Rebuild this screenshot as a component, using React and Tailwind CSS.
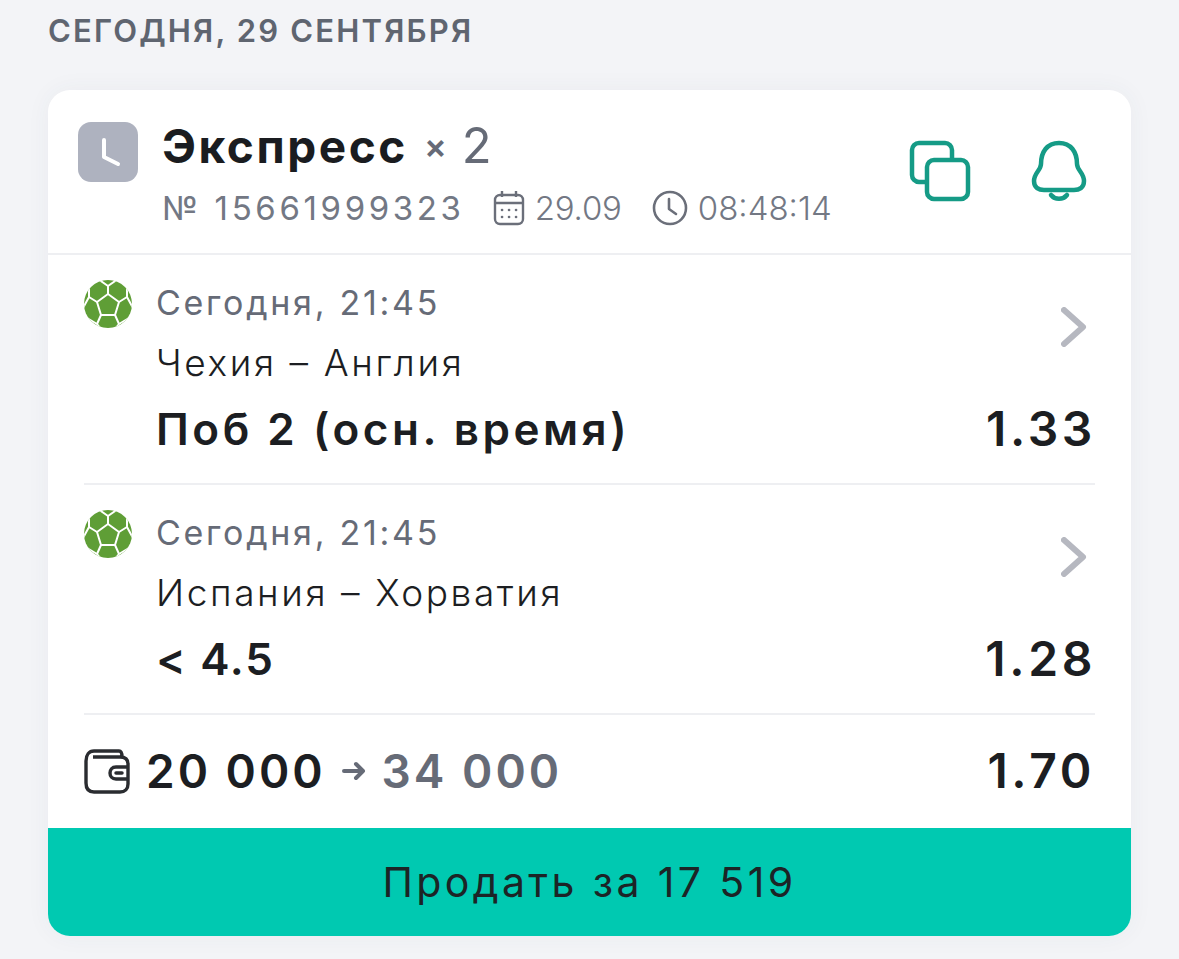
import React from 'react';

const Ball = () => (
  <svg width="50" height="50" viewBox="0 0 50 50" className="shrink-0">
    <clipPath id="ball-clip">
      <circle cx="25" cy="25" r="24" />
    </clipPath>
    <circle cx="25" cy="25" r="24" fill="#5f9e36" />
    <g fill="none" stroke="#fff" strokeWidth="2" strokeLinejoin="round" clipPath="url(#ball-clip)">
      <path d="M25 15 L36 23 L32 36 L18 36 L14 23 Z" />
      <path d="M25 15 L25 7 M36 23 L44 18 M32 36 L36 45 M18 36 L14 45 M14 23 L6 18" />
      <path d="M15 0 L25 7 L35 0 M44 18 L44 6 M44 18 L50 29 M36 45 L46 39 M14 45 L4 39 M6 18 L6 6 M6 18 L0 29 M14 45 L18 50 M36 45 L32 50" />
    </g>
  </svg>
);

const Chevron = () => (
  <svg width="26" height="40" viewBox="0 0 26 40" fill="none" className="shrink-0">
    <path d="M3 3 L22 20 L3 37" stroke="#b6b8c0" strokeWidth="6" strokeLinecap="round" strokeLinejoin="round" />
  </svg>
);

const Bet = ({ team, pick, odd, pickTracking }) => (
  <div className="flex border-b-2 border-[#eeeff2] mx-9 h-[230px]">
    <div className="pt-6 shrink-0 w-[73px] -ml-[1px]">
      <Ball />
    </div>
    <div className="flex-1 flex flex-col pt-[25px]">
      <div className="flex justify-between items-start pr-2">
        <div>
          <div className="text-[34px] leading-[46px] text-[#666b77] tracking-[0.08em]">Сегодня, 21:45</div>
          <div className="text-[37px] leading-[46px] mt-[14px] text-[#1c1e22] tracking-[0.07em] font-light">{team}</div>
        </div>
        <div className="pt-[27px]">
          <Chevron />
        </div>
      </div>
      <div className="flex justify-between items-center mt-[13px] -mr-[1px]">
        <div className={`text-[44px] leading-[60px] font-semibold text-[#1c1e22] ${pickTracking}`}>{pick}</div>
        <div className="text-[48px] leading-[60px] font-semibold text-[#1c1e22] tracking-[0.075em]">{odd}</div>
      </div>
    </div>
  </div>
);

export default function App() {
  return (
    <div className="min-h-[959px] bg-[#f3f4f7] px-12 pt-[10px] font-['Inter','Noto_Sans',sans-serif] overflow-hidden">
      <div className="text-[31px] leading-[42px] font-semibold text-[#5f6570] tracking-[0.07em]">СЕГОДНЯ, 29 СЕНТЯБРЯ</div>

      <div className="mt-[38px] bg-white rounded-[22px] overflow-hidden shadow-[0_0_24px_rgba(60,70,100,0.05)]">
        <div className="h-[165px] border-b-2 border-[#eeeff2] flex pl-[30px] pr-[44px]">
          <div className="mt-[32px] w-[60px] h-[60px] rounded-[13px] bg-[#aeb2bf] flex items-center justify-center shrink-0">
            <svg width="30" height="34" viewBox="0 0 30 34" fill="none">
              <path d="M11 5 V22 L25 29" stroke="#fff" strokeWidth="4" strokeLinecap="round" strokeLinejoin="round" />
            </svg>
          </div>

          <div className="ml-[24px] flex-1 pt-[27px]">
            <div className="flex items-center h-[58px]">
              <span className="text-[46px] leading-[58px] font-bold text-[#1a1c20] tracking-[0.055em]">Экспресс</span>
              <span className="ml-[16px] text-[34px] leading-[58px] font-semibold text-[#666b77]">×</span>
              <span className="ml-[15px] text-[49px] leading-[58px] text-[#666b77]">2</span>
            </div>
            <div className="flex items-center mt-[11px] text-[#737884]">
              <span className="text-[33px] leading-[44px] tracking-[0.11em]">№ 15661999323</span>
              <svg className="ml-[28px] shrink-0" width="32" height="36" viewBox="0 0 32 36" fill="none" stroke="#6b6f7a" strokeWidth="2.4">
                <rect x="2" y="5" width="28" height="29" rx="5" />
                <path d="M2 13 H30 M9 1 V7 M23 1 V7" />
                <path d="M9 20h.1M16 20h.1M23 20h.1M9 27h.1M16 27h.1M23 27h.1" strokeLinecap="round" strokeWidth="2.6" />
              </svg>
              <span className="ml-[10px] text-[33px] leading-[44px] tracking-[-0.005em] font-light">29.09</span>
              <svg className="ml-[30px] shrink-0" width="36" height="36" viewBox="0 0 36 36" fill="none" stroke="#6b6f7a" strokeWidth="2.6">
                <circle cx="18" cy="18" r="16" />
                <path d="M17 9 V19 L24 24" strokeLinecap="round" strokeLinejoin="round" />
              </svg>
              <span className="ml-[10px] text-[33px] leading-[44px] tracking-[0] font-light">08:48:14</span>
            </div>
          </div>

          <div className="flex items-start pt-[50px] gap-[60px]">
            <svg width="62" height="62" viewBox="0 0 62 62" fill="none" stroke="#159b86" strokeWidth="4.5">
              <path d="M18 42 H10 a7 7 0 0 1 -7 -7 V10 a7 7 0 0 1 7 -7 H36 a7 7 0 0 1 7 7 V20" />
              <rect x="18" y="20" width="41" height="39" rx="7" />
            </svg>
            <svg width="56" height="62" viewBox="0 0 56 62" fill="none" stroke="#159b86" strokeWidth="4.5" strokeLinecap="round">
              <path d="M28 3 C40 3 46 12 46 24 C46 30 53 33 53 41 C53 48 48 50 43 50 H13 C8 50 3 48 3 41 C3 33 10 30 10 24 C10 12 16 3 28 3 Z" />
              <path d="M20 55 C24 60 32 60 36 55" />
            </svg>
          </div>
        </div>

        <Bet team="Чехия – Англия" pick="Поб 2 (осн. время)" odd="1.33" pickTracking="tracking-[0.08em]" />
        <Bet team="Испания – Хорватия" pick="< 4.5" odd="1.28" pickTracking="tracking-[0.04em]" />

        <div className="h-[113px] flex items-center justify-between mx-9 -mr-[1px] pr-[37px] pb-[2px]">
          <div className="flex items-center">
            <svg width="46" height="46" viewBox="0 0 46 46" fill="none" stroke="#2a2c30" strokeWidth="3.4" strokeLinejoin="round" className="shrink-0">
              <path d="M2 13 C2 7 5 3 10 3 H35 C37 3 38 5 38 9 M2 13 V35 C2 41 5 44 10 44 H36 C41 44 44 41 44 36 V16 C44 11 41 9 36 9 H9" />
              <path d="M44 19 H32 C28 19 26 22 26 25 C26 28 28 31 32 31 H44" />
              <path d="M32 25 H38" strokeLinecap="round" strokeWidth="3.5" />
            </svg>
            <span className="ml-[16px] text-[46px] leading-[60px] font-semibold text-[#1c1e22] tracking-[0.065em]">20 000</span>
            <svg className="ml-[16px] shrink-0" width="24" height="20" viewBox="0 0 24 20" fill="none" stroke="#666b77" strokeWidth="4" strokeLinecap="round" strokeLinejoin="round">
              <path d="M2 10 H21 M14 3 L21 10 L14 17" />
            </svg>
            <span className="ml-[16px] text-[46px] leading-[60px] font-semibold text-[#666b77] tracking-[0.065em]">34 000</span>
          </div>
          <div className="text-[48px] leading-[60px] font-semibold text-[#1c1e22] tracking-[0.075em]">1.70</div>
        </div>

        <div className="h-[108px] bg-[#00c9b1] flex items-center justify-center text-[41px] leading-[56px] text-[#1c2426] tracking-[0.083em]">
          Продать за 17 519
        </div>
      </div>
    </div>
  );
}
